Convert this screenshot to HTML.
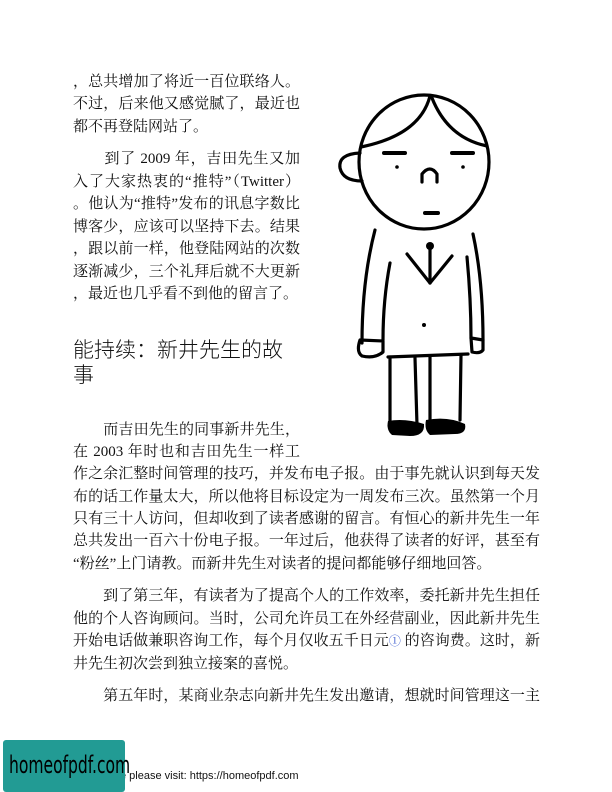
<!DOCTYPE html>
<html><head><meta charset="utf-8">
<style>
html,body{margin:0;padding:0;background:#fff;}
body{width:612px;height:792px;position:relative;overflow:hidden;font-family:"Liberation Serif","Noto Serif CJK SC",serif;color:#111;}
.l{position:absolute;left:73px;height:22px;line-height:22px;font-size:15px;white-space:nowrap;}
.j{text-align:justify;text-align-last:justify;white-space:normal;overflow:hidden;}
.s{width:227px;}
.f{width:467px;}
.h{position:absolute;left:73px;font-size:21px;line-height:26px;font-family:"Liberation Sans","Noto Sans CJK SC",sans-serif;font-weight:300;}
.fn{color:#3355cc;font-size:12px;}
</style></head><body>
<div class="l j s" style="top:71px">，总共增加了将近一百位联络人。</div>
<div class="l j s" style="top:93px">不过，后来他又感觉腻了，最近也</div>
<div class="l" style="top:116px">都不再登陆网站了。</div>

<div class="l j s" style="top:148px">&#12288;&#12288;到了 2009 年，吉田先生又加</div>
<div class="l j s" style="top:171px">入了大家热衷的“推特”（Twitter）</div>
<div class="l j s" style="top:193px">。他认为“推特”发布的讯息字数比</div>
<div class="l j s" style="top:216px">博客少，应该可以坚持下去。结果</div>
<div class="l j s" style="top:238px">，跟以前一样，他登陆网站的次数</div>
<div class="l j s" style="top:261px">逐渐减少，三个礼拜后就不大更新</div>
<div class="l" style="top:283px">，最近也几乎看不到他的留言了。</div>

<div class="h" style="top:338px">能持续：新井先生的故</div>
<div class="h" style="top:363px">事</div>

<div class="l j s" style="top:419px">&#12288;&#12288;而吉田先生的同事新井先生，</div>
<div class="l j s" style="top:441px">在 2003 年时也和吉田先生一样工</div>
<div class="l j f" style="top:463px">作之余汇整时间管理的技巧，并发布电子报。由于事先就认识到每天发</div>
<div class="l j f" style="top:486px">布的话工作量太大，所以他将目标设定为一周发布三次。虽然第一个月</div>
<div class="l j f" style="top:508px">只有三十人访问，但却收到了读者感谢的留言。有恒心的新井先生一年</div>
<div class="l j f" style="top:530px">总共发出一百六十份电子报。一年过后，他获得了读者的好评，甚至有</div>
<div class="l" style="top:553px">“粉丝”上门请教。而新井先生对读者的提问都能够仔细地回答。</div>

<div class="l j f" style="top:585px">&#12288;&#12288;到了第三年，有读者为了提高个人的工作效率，委托新井先生担任</div>
<div class="l j f" style="top:608px">他的个人咨询顾问。当时，公司允许员工在外经营副业，因此新井先生</div>
<div class="l j f" style="top:630px">开始电话做兼职咨询工作，每个月仅收五千日元<span class="fn">①</span> 的咨询费。这时，新</div>
<div class="l" style="top:653px">井先生初次尝到独立接案的喜悦。</div>
<div class="l j f" style="top:685px">&#12288;&#12288;第五年时，某商业杂志向新井先生发出邀请，想就时间管理这一主</div>

<svg style="position:absolute;left:0;top:0" width="612" height="792" viewBox="0 0 612 792">
<g fill="none" stroke="#000" stroke-width="3.2" stroke-linecap="round" stroke-linejoin="round">
<ellipse cx="424" cy="162" rx="65" ry="67"/>
<path d="M430 96 Q420 135 361 147"/>
<path d="M432 98 Q448 138 487 146"/>
<path d="M360 153 Q338 154 340 168 Q343 181 362 181"/>
<path d="M422 182 L422 174 Q430 164 437 174 L437 182"/>
<path d="M375 230 Q362 280 362 343"/>
<path d="M390 263 Q383 300 383 340"/>
<path d="M473 234 Q483 280 483 340"/>
<path d="M467 257 Q471 300 471 338"/>
<path d="M360 340 Q356 352 362 356 Q375 359 383 352 L383 341 Z"/>
<path d="M471 338 L472 352 Q480 354 483 350 L483 340 Z"/>
<path d="M388 357 L468 354"/>
<path d="M407 254 L430 283 L452 256"/>
<path d="M430 247 L430 283"/>
<path d="M390 357 L390 425"/>
<path d="M415 358 L417 425"/>
<path d="M430 357 L430 422"/>
<path d="M461 355 L460 420"/>
</g>
<g fill="#000">
<rect x="382" y="151" width="25" height="4" rx="2"/>
<rect x="450" y="151" width="25" height="4" rx="2"/>
<circle cx="397" cy="167" r="1.8"/>
<circle cx="463" cy="167" r="1.8"/>
<rect x="423" y="211" width="17" height="4" rx="2"/>
<circle cx="430" cy="246" r="4"/>
<circle cx="424" cy="325" r="2"/>
<path d="M388 421 Q405 418 424 424 Q425 436 410 436 L392 435 Q386 430 388 421 Z"/>
<path d="M426 420 Q448 416 465 424 Q467 434 455 434 L430 435 Q424 430 426 420 Z"/>
</g>
</svg>

<div style="position:absolute;left:120px;top:770px;font-family:'Liberation Sans',sans-serif;font-size:11px;color:#111;">e please visit: https://homeofpdf.com</div>
<div style="position:absolute;left:3px;top:740px;width:122px;height:52px;background:#229b94;border-radius:3px;"></div>
<div style="position:absolute;left:9px;top:751px;font-family:'DejaVu Sans Condensed','DejaVu Sans',sans-serif;font-size:24px;color:#000;transform:scaleX(0.72);transform-origin:left top;white-space:nowrap;">homeofpdf.com</div>
</body></html>
